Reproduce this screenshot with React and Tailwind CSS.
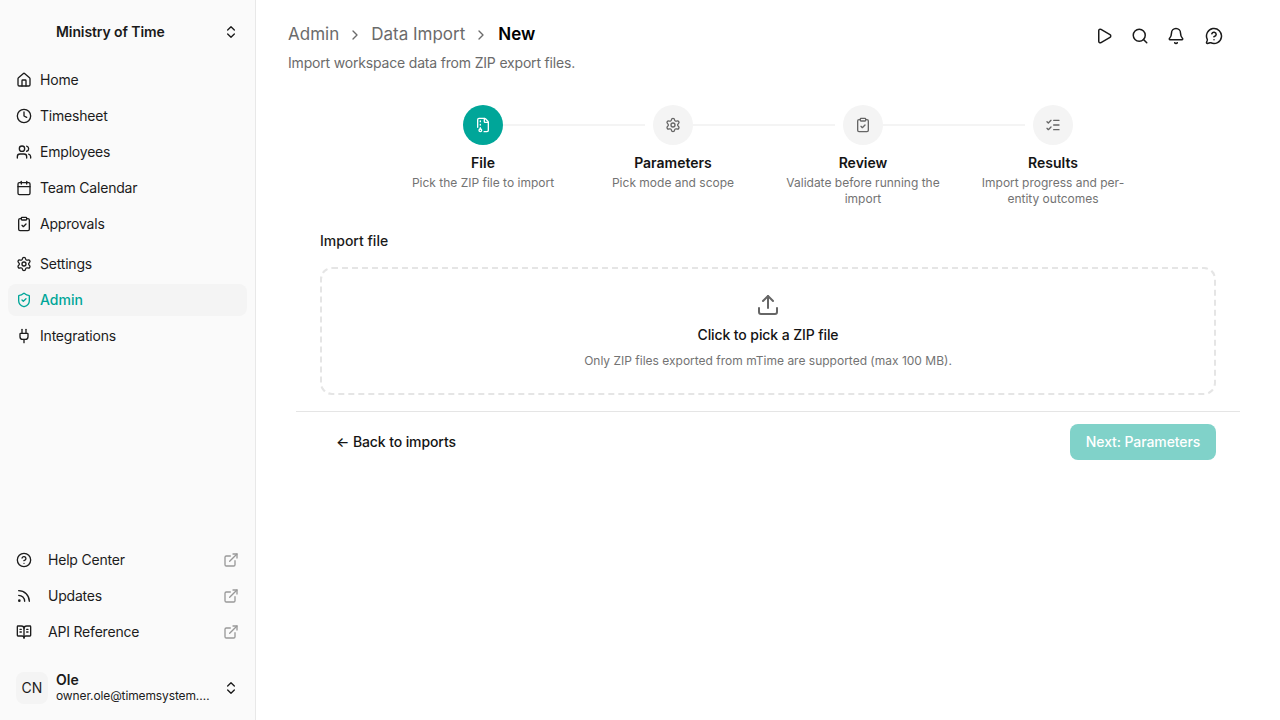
import {
  Bell,
  BookOpenText,
  Calendar,
  ChevronRight,
  ChevronsUpDown,
  CircleHelp,
  ClipboardCheck,
  Clock,
  ExternalLink,
  FileArchive,
  House,
  ListChecks,
  MessageCircleQuestionMark,
  Play,
  Plug,
  Rss,
  Search,
  Settings,
  ShieldCheck,
  Upload,
  Users,
} from "lucide-react";

const mainNav = [
  { label: "Home", icon: House },
  { label: "Timesheet", icon: Clock },
  { label: "Employees", icon: Users },
  { label: "Team Calendar", icon: Calendar },
  { label: "Approvals", icon: ClipboardCheck },
];

const adminNav = [
  { label: "Settings", icon: Settings },
  { label: "Admin", icon: ShieldCheck, active: true },
  { label: "Integrations", icon: Plug },
];

const links = [
  { label: "Help Center", icon: CircleHelp },
  { label: "Updates", icon: Rss },
  { label: "API Reference", icon: BookOpenText },
];

const steps = [
  { title: "File", text: "Pick the ZIP file to import", icon: FileArchive },
  { title: "Parameters", text: "Pick mode and scope", icon: Settings },
  { title: "Review", text: "Validate before running the import", icon: ClipboardCheck },
  { title: "Results", text: "Import progress and per-entity outcomes", icon: ListChecks },
];

const NavItem = ({ item }) => {
  const Icon = item.icon;
  return (
    <a
      className={`flex h-8 items-center gap-2 rounded-lg px-2 text-sm tracking-[-0.2px] ${
        item.active
          ? "bg-[#f4f4f4] font-medium tracking-normal text-[#00a699]"
          : "text-[#1c1c1c]"
      }`}
    >
      <Icon className="size-4 shrink-0" />
      <span>{item.label}</span>
    </a>
  );
};

const Sidebar = () => (
  <aside className="flex h-full w-[256px] shrink-0 flex-col border-r border-[#e8e8e8] bg-[#fafafa]">
    <div className="mt-4 flex h-8 items-center justify-between pl-[56px] pr-[16px]">
      <span className="text-sm font-semibold tracking-[-0.1px] text-[#1a1a1a]">
        Ministry of Time
      </span>
      <ChevronsUpDown className="size-4 text-[#1a1a1a]" />
    </div>
    <nav className="mt-4 flex flex-col gap-1 px-2">
      {mainNav.map((item) => (
        <NavItem key={item.label} item={item} />
      ))}
    </nav>
    <nav className="mt-2 flex flex-col gap-1 px-2">
      {adminNav.map((item) => (
        <NavItem key={item.label} item={item} />
      ))}
    </nav>
    <div className="mt-auto flex flex-col gap-1 px-2">
      {links.map(({ label, icon: Icon }) => (
        <a
          key={label}
          className="flex h-8 items-center px-2 text-sm tracking-[-0.2px] text-[#1c1c1c]"
        >
          <Icon className="size-4 shrink-0" />
          <span className="ml-4 flex-1">{label}</span>
          <ExternalLink className="size-4 text-[#999999]" />
        </a>
      ))}
    </div>
    <div className="mb-4 mt-[24px] flex h-8 items-center px-4">
      <div className="flex size-8 shrink-0 items-center justify-center rounded-lg bg-[#f4f4f4] text-sm text-[#1c1c1c]">
        CN
      </div>
      <div className="ml-2 w-[155px] min-w-0">
        <div className="text-sm font-semibold leading-4 text-[#1a1a1a]">Ole</div>
        <div className="truncate text-xs leading-4 tracking-[-0.12px] text-[#1c1c1c]">
          owner.ole@timemsystem.com
        </div>
      </div>
      <ChevronsUpDown className="ml-auto size-4 text-[#1a1a1a]" />
    </div>
  </aside>
);

const Stepper = () => (
  <div className="mt-8">
    <div className="mx-auto flex w-[610px] items-center">
      {steps.map((step, i) => {
        const Icon = step.icon;
        return (
          <div key={step.title} className={`flex items-center ${i < 3 ? "flex-1" : ""}`}>
            <div
              className={`flex size-10 shrink-0 items-center justify-center rounded-full ${
                i === 0 ? "bg-[#00a699] text-white" : "bg-[#f4f4f4] text-[#666666]"
              }`}
            >
              <Icon className="size-4" />
            </div>
            {i < 3 && <div className="mr-2 h-0.5 flex-1 bg-[#f4f4f4]" />}
          </div>
        );
      })}
    </div>
    <div className="mx-auto mt-2 grid w-[760px] grid-cols-4">
      {steps.map((step) => (
        <div key={step.title} className="flex flex-col items-center px-2 text-center">
          <div className="text-sm font-semibold leading-5 text-[#141414]">{step.title}</div>
          <div className="mt-0.5 text-xs leading-4 text-[#737373]">{step.text}</div>
        </div>
      ))}
    </div>
  </div>
);

const App = () => (
  <div className="flex h-screen w-full overflow-hidden bg-white font-['Inter',sans-serif]">
    <Sidebar />
    <main className="flex-1 px-8 pt-[21px]">
      <div className="flex items-start justify-between">
        <div>
          <div className="flex h-7 items-center text-[17px]">
            <span className="text-[#6b6b6b]">Admin</span>
            <ChevronRight className="mx-2 size-4 text-[#6b6b6b]" />
            <span className="text-[#6b6b6b]">Data Import</span>
            <ChevronRight className="mx-2 size-4 text-[#6b6b6b]" />
            <span className="ml-px font-semibold text-black">New</span>
          </div>
          <p className="mt-1 text-sm leading-5 tracking-[-0.18px] text-[#6b6b6b]">
            Import workspace data from ZIP export files.
          </p>
        </div>
        <div className="mr-[25px] mt-1.5 flex items-center text-[#1a1a1a]">
          <Play className="size-[18px]" />
          <Search className="ml-[18px] size-[18px]" />
          <Bell className="ml-[18px] size-[18px]" />
          <MessageCircleQuestionMark className="ml-5 size-[18px]" />
        </div>
      </div>

      <Stepper />

      <div className="mx-2 mt-6">
        <div className="px-6">
          <div className="text-sm font-medium leading-5 text-[#1a1a1a]">Import file</div>
          <div className="mt-4 flex h-32 flex-col items-center rounded-xl border-2 border-dashed border-[#e5e5e5] pt-[24px]">
            <Upload className="size-6 text-[#666666]" />
            <div className="mt-[8px] text-sm font-medium leading-5 tracking-[-0.1px] text-[#141414]">
              Click to pick a ZIP file
            </div>
            <div className="mt-[8px] text-xs leading-4 text-[#737373]">
              Only ZIP files exported from mTime are supported (max 100 MB).
            </div>
          </div>
        </div>
        <div className="mt-4 flex items-center justify-between border-t border-[#e5e5e5] px-6 pt-3">
          <button className="flex h-9 items-center pl-4 text-sm font-medium tracking-[-0.1px] text-[#141414]">
            ← Back to imports
          </button>
          <button className="flex h-9 w-[146px] items-center justify-center rounded-lg bg-[#80d2c9] text-sm font-medium tracking-[-0.1px] text-white">
            Next: Parameters
          </button>
        </div>
      </div>
    </main>
  </div>
);

export default App;
